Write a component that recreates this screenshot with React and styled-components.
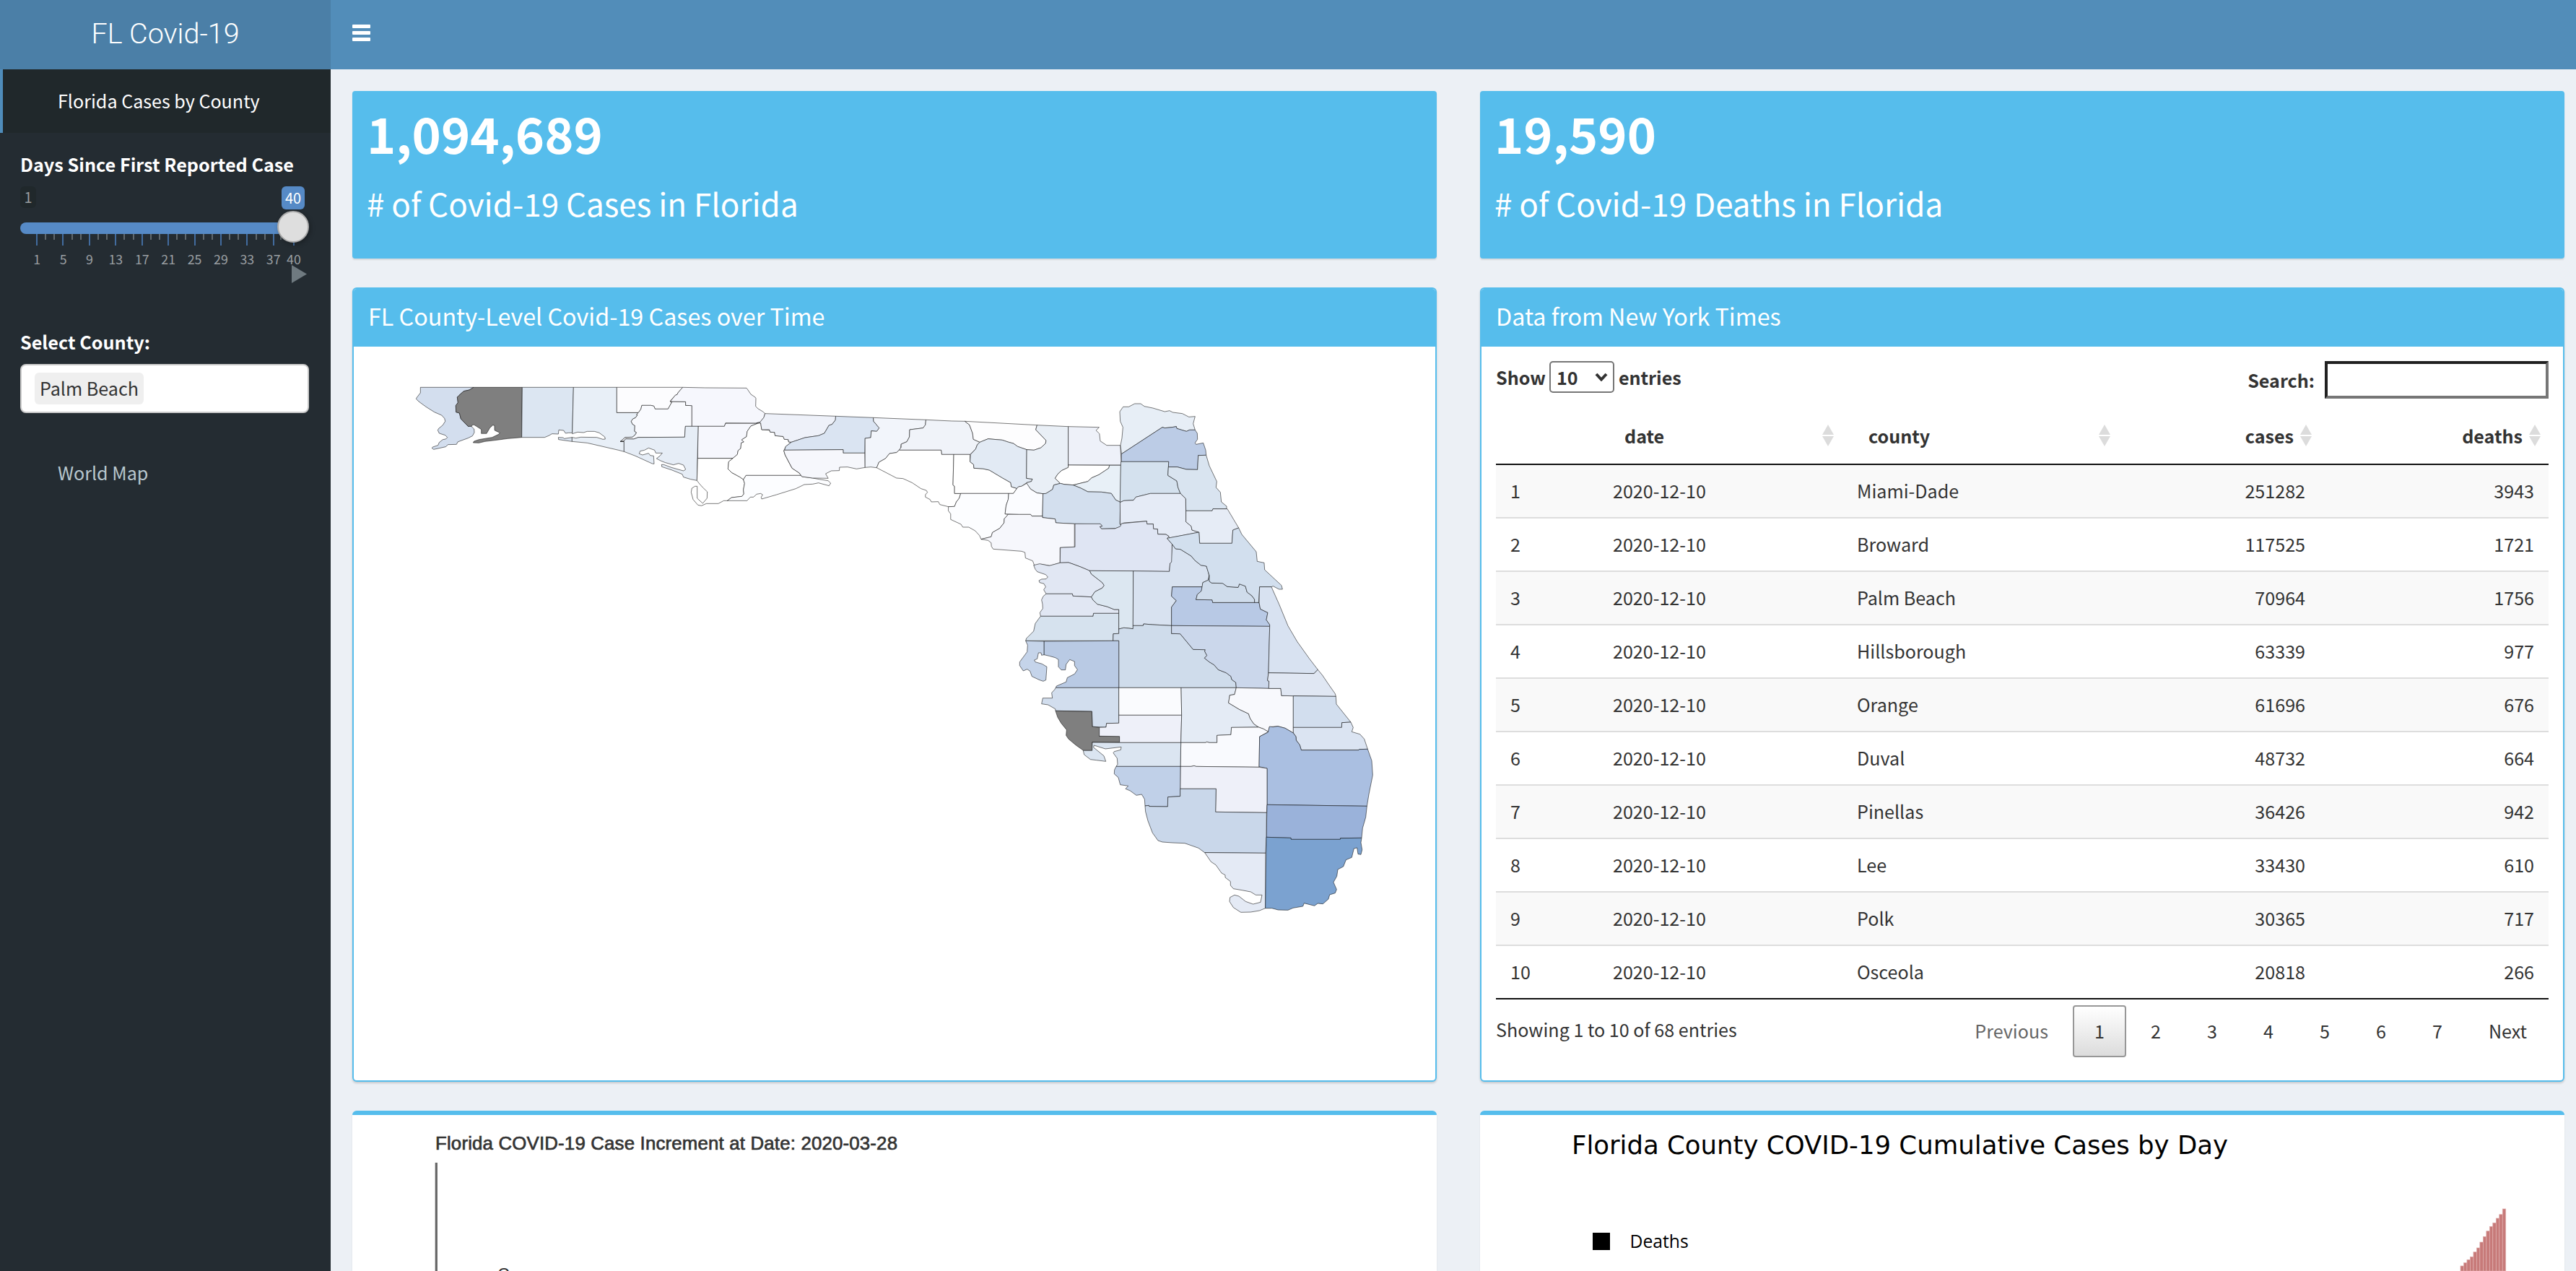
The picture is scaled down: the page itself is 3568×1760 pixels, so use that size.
import React from "react";
import styled, { createGlobalStyle } from "styled-components";

const Global = createGlobalStyle`
  *, *::before, *::after { box-sizing: border-box; }
  html, body { margin: 0; padding: 0; overflow: hidden; background: #ecf0f5; }
  body {
    font-family: "Noto Sans CJK SC", "Noto Sans", sans-serif;
    font-size: 25.1px;
    color: #333;
  }
`;

/* ---------- shell ---------- */
const Page = styled.div`
  display: flex;
  width: 3568px;
  height: 1760px;
  overflow: hidden;
`;
const Sidebar = styled.aside`
  display: flex;
  flex-direction: column;
  width: 458px;
  height: 1760px;
  background: #242c32;
  color: #fff;
`;
const Brand = styled.div`
  height: 96px;
  display: flex;
  align-items: center;
  justify-content: center;
  padding-bottom: 4px;
  background: #4b7fa7;
  font-family: Roboto, sans-serif;
  font-weight: 300;
  font-size: 39.5px;
`;
const MenuItem = styled.div`
  height: 88px;
  line-height: 86px;
  padding-left: ${(p) => (p.$active ? 76 : 80)}px;
  border-left: ${(p) => (p.$active ? "4px solid #4f8cba" : "0")};
  background: ${(p) => (p.$active ? "#20282b" : "transparent")};
  color: ${(p) => (p.$active ? "#fff" : "#b8c7ce")};
`;
const Controls = styled.div`
  display: flex;
  flex-direction: column;
  padding: 29px 30px 39px 28px;
`;
const Label = styled.label`
  height: 28px;
  line-height: 28px;
  font-size: 25.2px;
  font-weight: 700;
  white-space: nowrap;
`;
const Slider = styled.div`
  display: flex;
  flex-direction: column;
  height: 201px;
  margin-top: 17px;
  position: relative;
`;
const SliderEnds = styled.div`
  display: flex;
  justify-content: space-between;
  padding-right: 6px;
  height: 50px;
`;
const EndTag = styled.span`
  height: ${(p) => (p.$on ? 32 : 30)}px;
  width: ${(p) => (p.$on ? 32 : 22)}px;
  line-height: ${(p) => (p.$on ? 31 : 29)}px;
  text-align: center;
  border-radius: 6px;
  font-size: 20px;
  background: ${(p) => (p.$on ? "#568ac6" : "#20282b")};
  color: ${(p) => (p.$on ? "#fff" : "#999e9f")};
`;
const Track = styled.div`
  height: 16px;
  width: 394px;
  border-radius: 8px;
  background: #568ac6;
`;
const Knob = styled.div`
  position: absolute;
  left: 356px;
  top: 34px;
  width: 44px;
  height: 44px;
  border-radius: 50%;
  border: 2px solid #ababab;
  background: #dedede;
  box-shadow: 2px 2px 6px rgba(0, 0, 0, 0.3);
`;
const Ticks = styled.div`
  display: flex;
  padding-left: 22px;
`;
const Tick = styled.i`
  width: ${(p) => p.$w}px;
  height: ${(p) => (p.$tall ? 16 : 8)}px;
  border-left: 2px solid ${(p) => (p.$tall ? "#426c9f" : "#60686d")};
`;
const TickLabels = styled.div`
  display: flex;
  padding-left: 5px;
  margin-top: 6px;
  font-size: 17.8px;
  line-height: 24px;
  color: #9a9fa2;
`;
const TickLabel = styled.span`
  width: ${(p) => p.$w}px;
  display: flex;
  justify-content: center;
`;
const PlayRow = styled.div`
  display: flex;
  justify-content: flex-end;
  padding-right: 3px;
  margin-top: -3px;
`;
const Select = styled.div`
  display: flex;
  align-items: center;
  height: 68px;
  margin-top: 17px;
  padding-left: 18px;
  border: 2px solid #ccc;
  border-radius: 8px;
  background: #fff;
`;
const Chip = styled.span`
  height: 44px;
  line-height: 42px;
  padding: 0 7px;
  border-radius: 6px;
  background: #efefef;
  color: #333;
`;

const Main = styled.main`
  flex: 1;
  display: flex;
  flex-direction: column;
`;
const TopBar = styled.header`
  flex: none;
  height: 96px;
  background: #528db9;
  padding: 34px 30px;
`;
const Burger = styled.div`
  display: flex;
  flex-direction: column;
  justify-content: space-between;
  width: 25px;
  height: 23px;
`;
const BurgerLine = styled.span`
  height: 5px;
  border-radius: 1px;
  background: #fff;
`;
const Content = styled.div`
  display: grid;
  grid-template-columns: 1502px 1502px;
  grid-template-rows: 232px 1100px 300px;
  gap: 40px 60px;
  padding: 30px 0 0 30px;
`;

/* ---------- cards ---------- */
const ValueBox = styled.section`
  border-radius: 4px;
  background: #56bdec;
  color: #fff;
  padding: 20px;
  box-shadow: 0 2px 2px rgba(0, 0, 0, 0.1);
`;
const Value = styled.div`
  font-weight: 700;
  font-size: 68.4px;
  line-height: 76px;
  white-space: nowrap;
`;
const Caption = styled.div`
  font-size: 44px;
  line-height: 60px;
  margin-top: 29px;
  white-space: nowrap;
`;
const Box = styled.section`
  display: flex;
  flex-direction: column;
  border: 2px solid #56bdec;
  border-radius: 6px;
  background: #fff;
  overflow: hidden;
  box-shadow: 0 2px 3px rgba(0, 0, 0, 0.16);
`;
const BoxHeader = styled.div`
  height: 80px;
  line-height: 74px;
  padding-left: 20px;
  background: #56bdec;
  color: #fff;
  font-size: 32.3px;
`;
const BoxBody = styled.div`
  flex: 1;
  padding: ${(p) => p.$pad || "0"};
`;
const PlotBox = styled.section`
  border-top: 6px solid #56bdec;
  border-radius: 6px;
  background: #fff;
  box-shadow: 0 2px 2px rgba(0, 0, 0, 0.1);
`;
const Plot = styled.svg`
  display: block;
`;

/* ---------- table ---------- */
const Tools = styled.div`
  display: flex;
  justify-content: space-between;
  font-weight: 700;
  height: 66px;
`;
const Length = styled.div`
  display: flex;
  align-items: center;
  height: 44px;
`;
const LengthSelect = styled.span`
  display: flex;
  align-items: center;
  justify-content: space-between;
  width: 90px;
  height: 44px;
  margin: 0 6px 0 5px;
  padding: 0 7px 1px 8px;
  border: 2px solid #767676;
  border-radius: 5px;
`;
const Search = styled.div`
  display: flex;
  align-items: center;
  height: 52px;
`;
const SearchInput = styled.input`
  width: 310px;
  height: 52px;
  margin-left: 14px;
  border: 4px solid;
  border-color: #212121 #767676 #767676 #212121;
  background: #fff;
  outline: none;
`;
const Table = styled.div`
  display: grid;
  border-bottom: 2px solid #111;
`;
const Row = styled.div`
  display: grid;
  grid-template-columns: 142px 338px 383px 278px 317px;
  align-items: center;
  height: ${(p) => (p.$first ? 72 : 74)}px;
  border-top: ${(p) => (p.$first ? "0" : "2px solid #ddd")};
  background: ${(p) => (p.$odd ? "#f9f9f9" : "#fff")};
`;
const HeadRow = styled(Row)`
  height: 78px;
  border-top: 0;
  border-bottom: 2px solid #111;
  font-weight: 700;
  padding-bottom: 2px;
`;
const Cell = styled.div`
  padding: 0 20px 2px;
  text-align: ${(p) => (p.$right ? "right" : "left")};
`;
const HeadCell = styled.div`
  display: flex;
  align-items: center;
  justify-content: ${(p) => (p.$right ? "flex-end" : "space-between")};
  gap: 9px;
  padding: 0 ${(p) => (p.$right ? 11 : 12)}px 0 36px;
`;
const Footer = styled.div`
  display: flex;
  justify-content: space-between;
  margin-top: 8px;
`;
const Info = styled.div`
  line-height: 66px;
`;
const Pager = styled.div`
  display: flex;
  gap: 4px;
`;
const PageButton = styled.span`
  min-width: 74px;
  height: 72px;
  line-height: 66px;
  padding: 0 ${(p) => (p.$wide ? 28 : 0)}px;
  text-align: center;
  border: 2px solid ${(p) => (p.$current ? "#979797" : "transparent")};
  border-radius: 4px;
  background: ${(p) => (p.$current ? "linear-gradient(#fff, #dcdcdc)" : "transparent")};
  color: ${(p) => (p.$muted ? "#666" : "#333")};
`;

/* ---------- data ---------- */
const rows = [
  ["2020-12-10", "Miami-Dade", 251282, 3943],
  ["2020-12-10", "Broward", 117525, 1721],
  ["2020-12-10", "Palm Beach", 70964, 1756],
  ["2020-12-10", "Hillsborough", 63339, 977],
  ["2020-12-10", "Orange", 61696, 676],
  ["2020-12-10", "Duval", 48732, 664],
  ["2020-12-10", "Pinellas", 36426, 942],
  ["2020-12-10", "Lee", 33430, 610],
  ["2020-12-10", "Polk", 30365, 717],
  ["2020-12-10", "Osceola", 20818, 266],
];

const western = [
  ["Escambia", "#d3deee", "67,109 288,109 270,120 247,125 228,142 220,150 223,172 214,185 215,212 229,216 235,240 265,271 277,270 290,282 291,297 283,311 265,320 240,329 222,336 217,346 182,347 172,356 122,367 115,362 118,357 140,350 145,338 160,326 172,324 179,317 170,308 145,300 139,287 143,280 160,266 170,250 167,238 155,225 125,212 90,190 60,168 49,157 53,150 67,132"],
  ["Santa Rosa", "#7f7f7f", "288,109 490,109 488,317 430,322 385,328 335,334 310,340 286,339 290,333 310,326 365,317 392,304 397,298 380,290 375,287 375,268 368,266 355,278 342,301 320,301 320,284 300,271 290,265 283,265 280,271 265,271 235,240 229,216 215,212 214,185 223,172 220,150 228,142 247,125 270,120"],
  ["Okaloosa", "#dce6f2", "490,109 703,109 698,298 682,298 670,300 662,288 642,286 640,303 614,302 600,310 583,317 488,317"],
  ["Okaloosa Island", "#dce6f2", "640,317 660,318 665,322 697,317 697,334 641,326"],
  ["Walton", "#e8eff7", "703,109 883,109 883,214 973,214 965,222 969,224 960,236 950,240 943,250 948,262 958,268 957,292 965,297 958,308 948,316 918,317 898,334 913,334 913,376 890,370 760,340 697,334 697,317 713,320 733,316 800,317 825,325 835,324 833,315 810,298 790,292 760,292 745,297 720,295 698,302"],
  ["Holmes", "#fcfcfe", "883,109 1157,109 1149,118 1137,132 1134,139 1126,142 1105,166 1112,170 1096,199 1042,199 1037,187 1025,184 987,184 983,200 973,214 883,214"],
  ["Washington", "#f9fafe", "1105,168 1169,169 1169,184 1195,185 1195,271 1168,271 1165,316 972,317 953,324 920,323 912,333 898,334 918,317 948,316 958,308 965,297 957,292 958,268 948,262 943,250 950,240 960,236 969,224 965,222 973,214 983,200 987,184 1025,184 1037,187 1042,199 1096,199 1112,170"],
  ["Jackson", "#f6f7fd", "1157,109 1250,111 1422,112 1428,120 1440,138 1458,150 1461,155 1460,188 1470,198 1490,210 1499,218 1494,235 1479,253 1468,258 1335,257 1330,271 1195,271 1195,185 1169,184 1169,169 1105,168 1126,142 1134,139 1137,132 1149,118"],
  ["Calhoun", "#f6f7fd", "1221,271 1330,271 1335,259 1468,259 1440,270 1425,292 1422,314 1402,327 1411,336 1400,340 1398,363 1387,372 1384,388 1365,404 1219,404"],
  ["Bay", "#e6edf6", "1168,271 1221,271 1216,496 1190,491 1160,482 1155,470 1110,452 1070,439 1069,430 1078,430 1110,442 1160,456 1169,450 1160,432 1140,425 1118,431 1085,422 1065,414 1048,405 1062,394 1072,382 1045,382 1040,370 1015,361 998,370 980,374 976,385 990,390 1015,383 1022,392 1036,394 1038,427 1030,426 960,394 913,376 913,334 898,334 912,333 920,323 953,324 972,317 1165,316"],
  ["Gulf", "#fff", "1219,404 1365,404 1348,418 1345,448 1360,463 1395,482 1409,492 1414,508 1409,535 1411,552 1403,562 1360,567 1342,580 1327,580 1305,592 1255,592 1235,601 1220,598 1200,575 1192,545 1195,528 1208,520 1217,520 1217,570 1240,591 1258,570 1259,543 1240,525 1225,508 1216,496"],
  ["Liberty", "#fff", "1468,259 1481,257 1485,285 1517,287 1520,295 1538,296 1541,310 1574,313 1579,325 1595,326 1597,336 1608,337 1585,355 1577,372 1582,390 1611,445 1641,465 1649,475 1420,475 1409,492 1395,482 1360,463 1345,448 1348,418 1365,404 1384,388 1387,372 1398,363 1400,340 1411,336 1402,327 1422,314 1425,292 1440,270"],
  ["Franklin", "#fcfdff", "1409,492 1420,475 1649,475 1652,480 1697,486 1724,491 1761,497 1772,507 1765,518 1721,506 1697,511 1662,513 1627,530 1547,555 1485,573 1483,565 1489,555 1481,550 1464,553 1451,565 1438,565 1424,580 1342,580 1360,567 1403,562 1411,552 1409,535 1414,508"],
];

const northern = [
  ["Gadsden", "#eef1f9", "55,98 329,109 328,125 315,143 303,147 285,180 262,190 210,198 157,217 147,216 145,206 130,205 125,193 94,190 92,176 75,175 72,165 42,165 38,137 22,137 36,133 50,115"],
  ["Leon", "#dae4f2", "329,109 475,115 476,130 498,158 488,172 467,170 465,198 443,201 442,262 358,262 358,248 131,250 135,235 157,217 210,198 262,190 285,180 303,147 315,143 328,125"],
  ["Wakulla", "#f6f7fc", "131,250 358,248 358,262 442,262 443,322 410,328 375,320 344,321 343,335 312,336 290,348 300,367 240,366 198,360 188,345 160,325 133,270 128,252"],
  ["Jefferson", "#f2f5fb", "475,115 679,124 677,145 668,158 616,165 615,195 605,215 583,225 580,245 565,260 538,264 522,285 497,300 488,323 465,320 443,322 443,201 465,198 467,170 488,172 498,158 476,130"],
  ["Madison", "#f0f3f9", "679,124 780,129 830,130 848,145 860,180 863,205 888,217 878,228 872,245 850,268 740,268 738,250 575,250 583,238 583,225 605,215 615,195 616,165 668,158 677,145"],
  ["Taylor", "#fff", "575,250 738,250 740,268 787,268 784,395 790,400 790,430 814,430 808,450 797,465 790,484 766,485 733,476 727,464 700,465 695,455 677,445 677,435 685,425 680,417 660,410 625,385 590,368 565,366 488,323 497,300 522,285 538,264 565,260"],
  ["Lafayette", "#fff", "787,268 850,268 850,298 864,310 865,325 900,327 925,333 975,365 1008,385 1010,402 1032,409 1018,430 790,430 790,400 784,395"],
  ["Hamilton", "#fdfdfe", "830,130 1110,146 1105,165 1145,210 1143,222 1125,240 1098,250 1070,248 1035,235 1018,222 1000,217 975,208 920,203 888,217 863,205 860,180 848,145"],
  ["Suwannee", "#e2eaf4", "888,217 920,203 975,208 1000,217 1018,222 1035,235 1070,248 1069,367 1092,370 1088,380 1070,385 1050,400 1038,402 1032,409 1010,402 1008,385 975,365 925,333 900,327 865,325 864,310 850,298 852,268 872,245 878,228"],
  ["Columbia", "#e9eff6", "1110,146 1231,152 1231,322 1205,335 1190,350 1180,367 1200,388 1175,395 1170,413 1145,430 1133,431 1110,428 1085,412 1070,390 1070,385 1088,380 1092,370 1069,367 1070,248 1098,250 1125,240 1143,222 1145,210 1105,165"],
  ["Baker", "#eef1f9", "1231,152 1351,155 1339,168 1352,182 1355,212 1380,230 1433,230 1437,312 1231,312"],
  ["Union", "#fff", "1231,312 1391,313 1388,325 1350,352 1322,365 1307,380 1250,395 1215,392 1200,388 1180,367 1190,350 1205,335 1231,322"],
  ["Bradford", "#e8f0f7", "1391,313 1435,313 1433,466 1415,457 1398,430 1360,424 1307,423 1280,408 1250,395 1307,380 1322,365 1350,352 1388,325"],
  ["Dixie", "#fcfdff", "814,430 1000,430 998,455 990,480 986,515 998,517 983,535 982,552 965,575 937,592 932,610 893,620 887,605 870,585 845,570 822,570 815,558 775,538 775,515 766,502 766,485 790,484 797,465 808,450"],
  ["Gilchrist", "#fbfcff", "1000,430 1018,430 1032,409 1038,402 1050,400 1070,388 1085,412 1110,428 1133,431 1131,524 1090,524 1085,517 1040,517 986,515 990,480 998,455"],
  ["Alachua", "#d3dfee", "1133,431 1145,430 1170,413 1175,395 1200,388 1215,392 1250,395 1280,408 1307,423 1360,424 1398,430 1415,457 1433,466 1431,557 1440,565 1415,575 1360,577 1353,568 1362,566 1356,557 1255,556 1183,552 1180,536 1131,530"],
  ["Levy", "#f6f7fc", "998,517 1040,517 1085,517 1090,524 1131,524 1131,530 1180,536 1183,552 1255,556 1255,652 1199,655 1199,718 1160,730 1125,724 1100,730 1093,710 1065,698 1063,675 1050,670 940,661 933,650 932,635 920,625 893,620 932,610 937,592 965,575 982,552 983,535"],
];

const peninsula = [
  ["Nassau", "#e7eef6", "520,266 516,230 522,200 526,155 515,130 513,90 527,70 550,70 575,57 600,57 615,68 650,75 700,90 720,86 733,93 773,98 800,112 826,110 818,140 826,166 803,166 790,172 750,160 748,152 730,155 700,158 690,155"],
  ["Duval", "#bccce6", "520,266 690,155 700,158 730,155 748,152 750,160 790,172 803,166 826,166 835,180 836,205 826,220 830,226 860,220 870,250 872,271 839,272 836,331 790,330 752,320 715,320 716,298 520,298"],
  ["Clay", "#d4e1ee", "518,298 716,298 715,320 713,355 750,378 755,405 765,430 640,430 580,445 570,458 530,460 514,467 517,312"],
  ["St. Johns", "#d9e4f0", "715,320 752,320 790,330 836,331 839,272 872,271 885,315 916,380 913,405 931,425 935,465 957,483 957,494 900,494 897,502 788,502 787,452 765,430 755,405 750,378 713,355"],
  ["Putnam", "#e5ebf6", "514,467 530,460 570,458 580,445 640,430 765,430 787,452 788,548 810,566 813,582 842,591 718,615 717,608 705,600 671,599 670,578 653,577 652,557 626,557 625,545 530,552 515,560"],
  ["Flagler", "#e6ecf6", "788,502 897,502 900,494 960,494 1007,573 983,582 979,637 845,637 842,591 813,582 810,566 788,548"],
  ["Marion", "#dfe5f3", "327,556 432,556 440,565 430,568 437,577 493,576 515,567 520,555 625,545 626,557 652,557 653,577 670,578 671,599 705,600 717,608 710,617 730,640 730,715 722,720 719,754 388,751 350,735 315,722 300,717 265,718 266,655 327,652"],
  ["Citrus", "#e1e7f3", "155,728 180,722 220,730 265,718 300,717 315,722 350,735 388,751 395,765 440,800 448,812 440,823 410,838 395,860 318,856 316,847 207,847 197,830 205,818 198,805 180,800 177,792 188,786 207,785 214,777 205,767 170,755 162,745"],
  ["Hernando", "#e1e7f3", "207,847 316,847 318,856 395,860 402,873 420,890 460,900 490,912 509,912 509,928 404,928 402,940 184,940 181,925 193,908 192,890 188,872 195,857"],
  ["Pasco", "#d6e2ee", "184,940 402,940 404,928 509,928 509,1012 486,1013 485,1042 122,1042 125,1032 155,1002 162,970 178,948"],
  ["Sumter", "#dce7f1", "388,751 569,752 568,992 550,990 530,988 509,993 509,912 490,912 460,900 420,890 402,873 395,860 410,838 440,823 448,812 440,800 395,765"],
  ["Lake", "#d8e2f0", "569,752 719,754 722,720 728,715 731,640 745,660 765,662 810,690 825,708 850,728 873,732 880,755 885,775 880,790 858,800 856,818 731,818 728,857 748,875 728,902 728,979 650,975 612,972 610,979 568,979"],
  ["Polk", "#cfdceb", "509,993 530,988 550,990 568,992 568,979 610,979 612,972 650,975 728,979 728,1012 764,1013 818,1078 868,1079 866,1086 875,1103 865,1114 885,1130 905,1142 922,1162 955,1175 975,1190 978,1203 995,1215 997,1237 509,1237 509,1042 485,1042 486,1013 509,1012"],
  ["Orange", "#b8c9e5", "731,818 856,818 852,835 835,850 830,871 897,872 899,883 1092,883 1097,910 1128,925 1122,955 1136,975 1136,982 728,979 728,902 748,875 728,857"],
  ["Osceola", "#cbd7eb", "728,979 1136,982 1131,1175 1127,1207 1133,1210 1132,1240 997,1237 995,1215 978,1203 975,1190 955,1175 922,1162 905,1142 885,1130 865,1114 875,1103 866,1086 868,1079 818,1078 764,1013 728,1012"],
  ["Seminole", "#cfdceb", "885,770 885,795 895,802 940,803 960,817 1005,820 1010,806 1035,815 1042,840 1062,855 1073,870 1073,883 899,883 897,872 830,871 835,850 852,835 858,800 880,790"],
  ["Volusia", "#d2dfee", "715,615 842,591 845,637 979,637 983,582 1007,573 1020,600 1080,672 1084,712 1113,718 1115,747 1185,812 1189,828 1175,828 1150,815 1143,818 1094,818 1090,883 1073,883 1073,870 1062,855 1042,840 1035,815 1010,806 1005,820 960,817 940,803 895,802 885,795 885,770 880,755 873,732 850,728 825,708 810,690 765,662 745,660 730,640 710,617"],
  ["Brevard", "#d8e2f1", "1094,818 1143,818 1175,890 1212,980 1250,1045 1300,1115 1336,1162 1320,1178 1131,1175 1136,982 1136,975 1122,955 1128,925 1097,910 1092,883"],
  ["Hillsborough", "#b9cae4", "198,1044 509,1042 509,1237 247,1237 250,1230 290,1213 295,1195 325,1180 337,1162 325,1145 325,1128 305,1120 290,1140 287,1163 270,1163 258,1150 258,1120 245,1112 220,1105 198,1100"],
  ["Pinellas", "#c5d4ea", "122,1042 198,1044 198,1100 188,1102 186,1092 175,1092 170,1117 158,1122 162,1130 190,1138 210,1150 206,1205 195,1210 180,1205 148,1190 140,1168 128,1160 112,1167 97,1145 97,1130 128,1088 130,1060"],
  ["Manatee", "#d2deee", "247,1237 509,1237 509,1384 458,1385 456,1401 400,1399 397,1335 246,1333 245,1325 215,1308 188,1304 193,1280 233,1280 230,1258 242,1245"],
  ["Sarasota", "#7f7f7f", "246,1333 397,1336 398,1398 428,1402 428,1438 512,1439 512,1464 398,1463 398,1498 362,1498 330,1475 300,1450 290,1435 292,1412 270,1385 255,1360"],
  ["Hardee", "#fafbfe", "509,1237 768,1237 770,1351 509,1351"],
  ["DeSoto", "#eef0f9", "509,1351 770,1351 767,1465 512,1465 512,1439 428,1438 428,1402 456,1401 458,1385 509,1384"],
  ["Highlands", "#e4ebf5", "768,1237 997,1237 990,1265 970,1268 965,1300 1010,1327 1048,1345 1055,1365 1070,1387 1090,1401 977,1402 975,1432 917,1435 917,1465 885,1465 875,1462 870,1465 767,1465 770,1351"],
  ["Okeechobee", "#f8f9fd", "997,1237 1132,1240 1182,1240 1185,1270 1234,1271 1234,1425 1200,1405 1170,1397 1135,1400 1130,1420 1110,1408 1090,1401 1070,1387 1055,1365 1048,1345 1010,1327 965,1300 970,1268 990,1265"],
  ["Indian River", "#e0e7f3", "1131,1175 1320,1178 1336,1162 1355,1185 1380,1222 1408,1262 1411,1273 1234,1271 1185,1270 1182,1240 1132,1240 1133,1210 1127,1207"],
  ["St. Lucie", "#d2deee", "1234,1271 1411,1273 1413,1305 1473,1380 1436,1382 1435,1402 1234,1402"],
  ["Martin", "#dbe4f2", "1234,1402 1435,1402 1436,1382 1473,1380 1483,1402 1477,1420 1511,1430 1529,1450 1543,1492 1508,1493 1506,1496 1267,1496 1261,1475 1246,1455 1245,1440 1234,1425"],
  ["Glades", "#f9fafe", "767,1465 870,1465 875,1462 885,1465 917,1465 917,1435 975,1432 977,1402 1090,1401 1110,1408 1130,1420 1094,1440 1092,1567 830,1564 822,1561 810,1564 765,1564"],
  ["Palm Beach", "#aabfe1", "1094,1440 1129,1422 1135,1398 1150,1400 1170,1397 1200,1405 1234,1425 1245,1440 1246,1455 1261,1475 1267,1496 1506,1496 1508,1493 1543,1492 1560,1540 1564,1600 1548,1680 1540,1729 1125,1723 1125,1572 1092,1565"],
  ["Charlotte", "#dbe5f1", "399,1464 512,1465 767,1465 765,1564 498,1564 504,1555 502,1530 486,1508 490,1502 517,1495 519,1483 453,1491 406,1476 404,1485 447,1520 455,1543 416,1538 391,1535 365,1515 361,1498 398,1498"],
  ["Hendry", "#eef0f9", "765,1564 810,1564 822,1561 830,1564 1092,1567 1125,1572 1125,1723 1123,1756 911,1753 913,1657 764,1657"],
  ["Lee", "#c0d0e8", "498,1564 765,1564 764,1688 713,1691 712,1731 635,1730 634,1726 618,1728 616,1700 604,1680 582,1684 556,1665 537,1657 548,1645 515,1640 507,1610 490,1595 491,1578"],
  ["Broward", "#9ab2da", "1125,1723 1540,1729 1535,1775 1522,1820 1518,1861 1430,1862 1429,1867 1225,1867 1224,1861 1122,1858"],
  ["Collier", "#c9d7ea", "618,1728 634,1726 635,1730 712,1731 713,1691 764,1688 764,1657 913,1657 911,1753 1123,1756 1122,1858 1119,1924 866,1922 840,1903 783,1883 732,1881 690,1878 672,1872 649,1840 630,1790 620,1752"],
  ["Monroe", "#e4eaf5", "866,1922 1119,1924 1118,2153 1093,2163 1057,2169 1016,2170 985,2150 969,2125 971,2108 990,2098 1008,2103 1036,2125 1067,2136 1098,2128 1104,2098 1078,2098 1057,2085 1021,2078 985,2072 973,2058 973,2042 951,2025 951,2015 936,2007 912,1973 892,1960"],
  ["Miami-Dade", "#7ba2d0", "1122,1858 1224,1861 1225,1867 1429,1867 1430,1862 1518,1861 1515,1880 1520,1910 1515,1930 1503,1928 1499,1902 1486,1905 1477,1942 1453,1952 1442,1980 1419,1992 1415,2020 1401,2045 1414,2075 1408,2090 1385,2097 1380,2115 1357,2135 1336,2133 1322,2143 1279,2132 1274,2145 1233,2152 1212,2161 1171,2160 1145,2153 1118,2153"],
];

const County = styled.polygon`
  fill: ${(p) => p.$fill};
  stroke: rgba(0, 0, 0, 0.52);
  stroke-width: 1px;
  stroke-linejoin: round;
  vector-effect: non-scaling-stroke;
`;

const CountyGroup = ({ items, transform }) => (
  <g transform={transform}>
    {items.map(([name, fill, points]) => (
      <County key={name} $fill={fill} points={points} />
    ))}
  </g>
);

const FloridaMap = () => (
  <Plot width="1498" height="1016" viewBox="490 480 1498 1016">
    <CountyGroup items={western} transform="translate(560 500) scale(0.33333)" />
    <CountyGroup items={northern} transform="translate(1040 540) scale(0.35714 0.33333)" />
    <CountyGroup items={peninsula} transform="translate(1380 540) scale(0.33333)" />
  </Plot>
);

const SortIcon = () => (
  <svg width="16" height="32" viewBox="0 0 16 32" fill="#dcdcdc">
    <path d="M8 1L16 15H0Z M8 31L0 17H16Z" />
  </svg>
);

const barTops = [1753, 1748.7, 1744.3, 1740.3, 1733.7, 1728, 1720, 1712.3, 1704.7, 1698.3, 1693.3, 1687, 1681.7, 1674];

const tickValues = [1, 5, 9, 13, 17, 21, 25, 29, 33, 37];

export default function App() {
  return (
    <>
      <Global />
      <Page>
        <Sidebar>
          <Brand>FL Covid-19</Brand>
          <MenuItem $active>Florida Cases by County</MenuItem>
          <Controls>
            <Label>Days Since First Reported Case</Label>
            <Slider>
              <SliderEnds>
                <EndTag>1</EndTag>
                <EndTag $on>40</EndTag>
              </SliderEnds>
              <Track />
              <Ticks>
                {Array.from({ length: 28 }, (_, i) => (
                  <Tick key={i} $w={i === 27 ? 10 : 12.15} $tall={i % 3 === 0} />
                ))}
                <Tick $w={18} />
                <Tick $w={2} $tall />
              </Ticks>
              <TickLabels>
                {tickValues.map((v) => (
                  <TickLabel key={v} $w={36.4}>{v}</TickLabel>
                ))}
                <TickLabel $w={20}>40</TickLabel>
              </TickLabels>
              <PlayRow>
                <svg width="21" height="25" viewBox="0 0 21 25">
                  <path d="M0 0L21 12.5L0 25Z" fill="#6f7a80" />
                </svg>
              </PlayRow>
              <Knob />
            </Slider>
            <Label>Select County:</Label>
            <Select>
              <Chip>Palm Beach</Chip>
            </Select>
          </Controls>
          <MenuItem>World Map</MenuItem>
        </Sidebar>
        <Main>
          <TopBar>
            <Burger>
              <BurgerLine />
              <BurgerLine />
              <BurgerLine />
            </Burger>
          </TopBar>
          <Content>
            <ValueBox>
              <Value>1,094,689</Value>
              <Caption># of Covid-19 Cases in Florida</Caption>
            </ValueBox>
            <ValueBox>
              <Value>19,590</Value>
              <Caption># of Covid-19 Deaths in Florida</Caption>
            </ValueBox>
            <Box>
              <BoxHeader>FL County-Level Covid-19 Cases over Time</BoxHeader>
              <BoxBody>
                <FloridaMap />
              </BoxBody>
            </Box>
            <Box>
              <BoxHeader>Data from New York Times</BoxHeader>
              <BoxBody $pad="20px 20px 0">
                <Tools>
                  <Length>
                    Show
                    <LengthSelect>
                      10
                      <svg width="18" height="12" viewBox="0 0 18 12">
                        <path d="M2 2L9 9.5L16 2" fill="none" stroke="#333" strokeWidth="4" />
                      </svg>
                    </LengthSelect>
                    entries
                  </Length>
                  <Search>
                    Search:
                    <SearchInput />
                  </Search>
                </Tools>
                <Table>
                  <HeadRow>
                    <span />
                    <HeadCell>date<SortIcon /></HeadCell>
                    <HeadCell>county<SortIcon /></HeadCell>
                    <HeadCell $right>cases<SortIcon /></HeadCell>
                    <HeadCell $right>deaths<SortIcon /></HeadCell>
                  </HeadRow>
                  {rows.map(([date, county, cases, deaths], i) => (
                    <Row key={county} $first={i === 0} $odd={i % 2 === 0}>
                      <Cell>{i + 1}</Cell>
                      <Cell>{date}</Cell>
                      <Cell>{county}</Cell>
                      <Cell $right>{cases}</Cell>
                      <Cell $right>{deaths}</Cell>
                    </Row>
                  ))}
                </Table>
                <Footer>
                  <Info>Showing 1 to 10 of 68 entries</Info>
                  <Pager>
                    <PageButton $wide $muted>Previous</PageButton>
                    {[1, 2, 3, 4, 5, 6, 7].map((n) => (
                      <PageButton key={n} $current={n === 1}>{n}</PageButton>
                    ))}
                    <PageButton $wide>Next</PageButton>
                  </Pager>
                </Footer>
              </BoxBody>
            </Box>
            <PlotBox>
              <Plot width="1502" height="216" viewBox="488 1544 1502 216" fontFamily='"Liberation Sans", Arial, sans-serif'>
                <text x="603" y="1592" fontSize="25.8" textLength="640" fill="#333" stroke="#333" strokeWidth="0.7">
                  Florida COVID-19 Case Increment at Date: 2020-03-28
                </text>
                <path d="M604.3 1610V1760" stroke="#666" strokeWidth="3.2" />
                <text x="689" y="1773" fontSize="23" fill="#333">Case</text>
              </Plot>
            </PlotBox>
            <PlotBox>
              <Plot width="1502" height="216" viewBox="2050 1544 1502 216" fontFamily='"DejaVu Sans", Verdana, sans-serif'>
                <text x="2177" y="1598" fontSize="34.8" textLength="909" lengthAdjust="spacingAndGlyphs" fill="#000">
                  Florida County COVID-19 Cumulative Cases by Day
                </text>
                <rect x="2206" y="1707" width="24" height="24" fill="#000" />
                <text x="2257.5" y="1728" fontSize="24.7" fill="#000" fontFamily='"Open Sans", Verdana, sans-serif'>Deaths</text>
                {barTops.map((top, i) => (
                  <rect key={top} x={3408 + i * 4.48} y={top} width="4.48" height={1760 - top} fill="#c77a79" stroke="#e0b0b0" strokeWidth="0.7" />
                ))}
              </Plot>
            </PlotBox>
          </Content>
        </Main>
      </Page>
    </>
  );
}
